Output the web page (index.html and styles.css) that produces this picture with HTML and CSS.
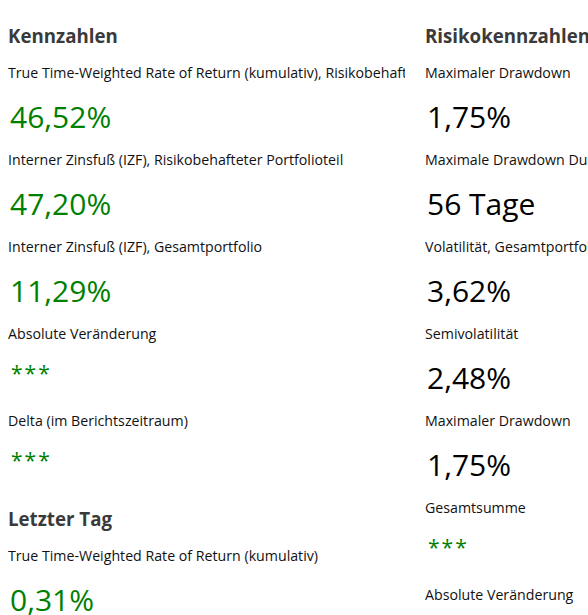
FILE: index.html
```html
<!DOCTYPE html>
<html lang="de">
<head>
<meta charset="utf-8">
<title>Kennzahlen</title>
<link rel="stylesheet" href="styles.css">
</head>
<body>
<div class="page">
  <div class="col">
    <section class="group">
      <h2 class="heading">Kennzahlen</h2>
      <div class="metric">
        <div class="label">True Time-Weighted Rate of Return (kumulativ), Risikobehafteter Portfolioteil</div>
        <div class="value pos">46,52%</div>
      </div>
      <div class="metric">
        <div class="label">Interner Zinsfuß (IZF), Risikobehafteter Portfolioteil</div>
        <div class="value pos">47,20%</div>
      </div>
      <div class="metric">
        <div class="label">Interner Zinsfuß (IZF), Gesamtportfolio</div>
        <div class="value pos">11,29%</div>
      </div>
      <div class="metric">
        <div class="label">Absolute Veränderung</div>
        <div class="value pos"><span class="masked">***</span></div>
      </div>
      <div class="metric">
        <div class="label">Delta (im Berichtszeitraum)</div>
        <div class="value pos"><span class="masked">***</span></div>
      </div>
    </section>
    <section class="group">
      <h2 class="heading">Letzter Tag</h2>
      <div class="metric">
        <div class="label">True Time-Weighted Rate of Return (kumulativ)</div>
        <div class="value pos">0,31%</div>
      </div>
    </section>
  </div>
  <div class="col">
    <section class="group">
      <h2 class="heading">Risikokennzahlen</h2>
      <div class="metric">
        <div class="label">Maximaler Drawdown</div>
        <div class="value">1,75%</div>
      </div>
      <div class="metric">
        <div class="label">Maximale Drawdown Duration</div>
        <div class="value">56 Tage</div>
      </div>
      <div class="metric">
        <div class="label">Volatilität, Gesamtportfolio</div>
        <div class="value">3,62%</div>
      </div>
      <div class="metric">
        <div class="label">Semivolatilität</div>
        <div class="value">2,48%</div>
      </div>
      <div class="metric">
        <div class="label">Maximaler Drawdown</div>
        <div class="value">1,75%</div>
      </div>
      <div class="metric">
        <div class="label">Gesamtsumme</div>
        <div class="value pos"><span class="masked">***</span></div>
      </div>
      <div class="metric">
        <div class="label">Absolute Veränderung</div>
        <div class="value pos"><span class="masked">***</span></div>
      </div>
    </section>
  </div>
</div>
</body>
</html>
```

FILE: styles.css
```css
html, body {
  margin: 0;
  padding: 0;
  overflow: hidden;
  background: #ffffff;
}

body {
  font-family: "Open Sans", "Noto Sans", sans-serif;
  color: #111111;
}

.page {
  display: grid;
  grid-template-columns: 397px 400px;
  column-gap: 20px;
  padding: 24px 0 0 8px;
  align-items: start;
}

.col {
  display: flex;
  flex-direction: column;
  gap: 20px;
  overflow: hidden;
  min-width: 0;
}

.group {
  display: flex;
  flex-direction: column;
  gap: 11px;
}

.heading {
  margin: 0 0 4px;
  font-size: 18.7px;
  line-height: 24px;
  font-weight: 700;
  color: #3a3a3a;
}

.metric {
  display: flex;
  flex-direction: column;
  gap: 12px;
}

.label {
  font-size: 14.2px;
  line-height: 20px;
  white-space: nowrap;
  color: #111111;
}

.value {
  font-size: 30px;
  line-height: 44px;
  height: 44px;
  white-space: nowrap;
  color: #000000;
  padding-left: 2px;
}

.value.pos {
  color: #008000;
}

.masked {
  font-size: 21px;
  line-height: 19px;
  letter-spacing: 2px;
  vertical-align: 8px;
  padding-left: 1px;
}
```
